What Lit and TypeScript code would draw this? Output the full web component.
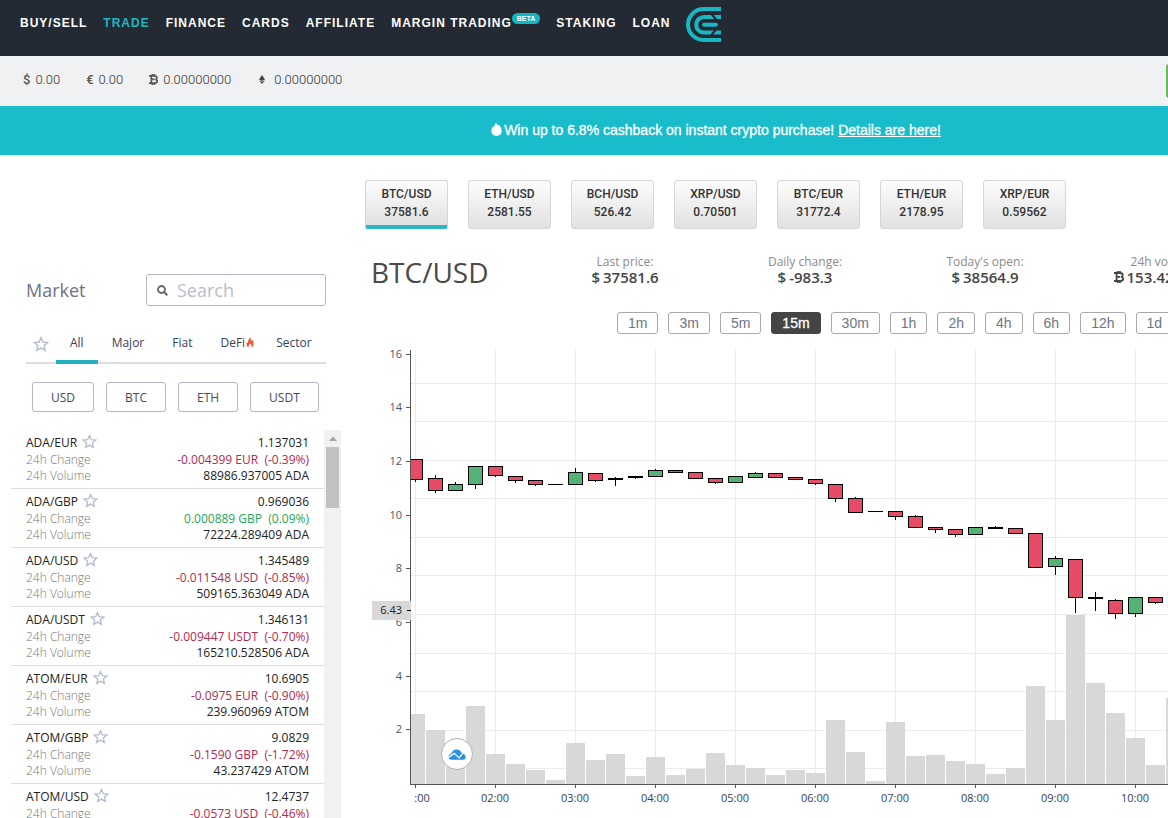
import { LitElement, html, css, svg } from "lit";
import { customElement, property } from "lit/decorators.js";
import { classMap } from "lit/directives/class-map.js";

const NAV = ["BUY/SELL", "TRADE", "FINANCE", "CARDS", "AFFILIATE", "MARGIN TRADING", "STAKING", "LOAN"];

const TICKERS = [
  ["BTC/USD", "37581.6"],
  ["ETH/USD", "2581.55"],
  ["BCH/USD", "526.42"],
  ["XRP/USD", "0.70501"],
  ["BTC/EUR", "31772.4"],
  ["ETH/EUR", "2178.95"],
  ["XRP/EUR", "0.59562"],
];

const STATS = [
  ["Last price:", "$", "37581.6"],
  ["Daily change:", "$", "-983.3"],
  ["Today's open:", "$", "38564.9"],
  ["24h volume:", "btc", "153.4226785"],
];

const INTERVALS = ["1m", "3m", "5m", "15m", "30m", "1h", "2h", "4h", "6h", "12h", "1d"];

const PAIRS = [
  ["ADA/EUR", "1.137031", "-0.004399 EUR", "(-0.39%)", "88986.937005 ADA"],
  ["ADA/GBP", "0.969036", "0.000889 GBP", "(0.09%)", "72224.289409 ADA"],
  ["ADA/USD", "1.345489", "-0.011548 USD", "(-0.85%)", "509165.363049 ADA"],
  ["ADA/USDT", "1.346131", "-0.009447 USDT", "(-0.70%)", "165210.528506 ADA"],
  ["ATOM/EUR", "10.6905", "-0.0975 EUR", "(-0.90%)", "239.960969 ATOM"],
  ["ATOM/GBP", "9.0829", "-0.1590 GBP", "(-1.72%)", "43.237429 ATOM"],
  ["ATOM/USD", "12.4737", "-0.0573 USD", "(-0.46%)", "1290.512874 ATOM"],
];

// Candles: [body top, body bottom, wick top, wick bottom, rising]
const CANDLES: number[][] = [
  [109, 130, 109, 132, 0], [128, 141, 125, 143, 0], [134, 141, 132, 141, 1], [116, 135, 116, 139, 1],
  [116, 126, 116, 127, 0], [126, 131, 126, 133, 0], [130, 135, 130, 136, 0], [134, 135, 134, 135, 0],
  [122, 135, 118, 135, 1], [123, 131, 123, 132, 0], [128, 130, 127, 136, 0], [126, 128, 126, 129, 0],
  [120, 127, 119, 127, 1], [120, 123, 120, 123, 0], [122, 129, 122, 129, 0], [128, 133, 128, 134, 0],
  [126, 133, 126, 133, 1], [123, 128, 122, 128, 1], [123, 128, 123, 128, 0], [127, 130, 127, 130, 0],
  [129, 134, 129, 135, 0], [134, 149, 134, 152, 0], [148, 163, 147, 163, 0], [161, 162, 161, 162, 0],
  [161, 167, 161, 170, 0], [166, 178, 165, 178, 0], [177, 180, 177, 183, 0], [179, 185, 179, 187, 0],
  [177, 185, 177, 185, 1], [177, 179, 176, 179, 0], [178, 184, 178, 184, 0], [183, 218, 183, 218, 0],
  [208, 217, 206, 225, 1], [209, 248, 209, 263, 0], [247, 249, 242, 261, 0], [250, 264, 249, 269, 0],
  [247, 264, 247, 267, 1], [247, 253, 247, 254, 0],
];

const VOLUMES = [
  70, 54, 29, 78, 30, 20, 14, 4, 41, 24, 30, 8, 27, 9, 15, 31, 19, 16, 9, 14, 11, 64, 32, 3, 62, 28, 29, 23, 20, 10,
  16, 98, 64, 169, 101, 71, 46, 19, 86,
];

const GRID_Y = [33, 71, 110, 148, 187, 225, 264, 303, 341, 380, 418];
const TICKS_Y: [string, number][] = [
  ["16", 4], ["14", 57], ["12", 111], ["10", 165], ["8", 218], ["6", 272], ["4", 326], ["2", 379],
];
const TICKS_X = [":00", "02:00", "03:00", "04:00", "05:00", "06:00", "07:00", "08:00", "09:00", "10:00", "11:00"];

const star = html`<svg class="star" viewBox="0 0 24 24" aria-hidden="true">
  <path d="M12 2.5l2.9 6.6 7.1.7-5.4 4.7 1.6 7-6.2-3.7-6.2 3.7 1.6-7L2 9.8l7.1-.7z" fill="none" stroke="currentColor" stroke-width="2.1" stroke-linejoin="miter"/>
</svg>`;

const btc = html`<svg class="btc" viewBox="0 0 10 12" aria-hidden="true">
  <path d="M0 2h5.8q3 0 3 2 0 1.5-1.6 1.9 2 .4 2 2.1Q9.2 10 6 10H0M2.6 2v8M2.6 5.9h3.6M3.7 0v2M6 0v2M3.7 10v2M6 10v2" fill="none" stroke="currentColor" stroke-width="1.8"/>
</svg>`;

@customElement("price-chart")
export class PriceChart extends LitElement {
  static styles = css`
    :host { display: block; position: relative; }
    .plot { display: block; width: 100%; height: 468px; overflow: hidden; font-family: "Open Sans", sans-serif; font-size: 11px; }
    .grid { stroke: #ebebeb; }
    .axis { stroke: #555; fill: none; }
    .ylabel { fill: #4a5568; text-anchor: end; }
    .xlabel { fill: #333f55; text-anchor: middle; font-weight: 500; }
    .vol { fill: #d8d8d8; }
    .candle { stroke: #000; }
    .wick { stroke: #000; }
    .up { fill: #55b276; }
    .down { fill: #e64c67; }
    .tag { fill: #d8d8d8; }
    .tagtext { fill: #222; text-anchor: end; }
    .badge {
      position: absolute; left: 81px; bottom: 48px; width: 32px; height: 32px; padding: 0;
      display: flex; align-items: center; justify-content: center;
      border: 1px solid #b5aeae; border-radius: 50%; background: #fff;
    }
    .cloud { width: 18px; height: 11px; }
  `;

  render() {
    const x = (i: number) => 55 + i * 20;
    return html`
      <svg class="plot" role="img" aria-label="BTC/USD candles and volume" shape-rendering="crispEdges">
        <g class="grid">
          ${GRID_Y.map((y) => svg`<line x1="51" x2="100%" y1=${y + 0.5} y2=${y + 0.5} />`)}
          ${TICKS_X.map((_, i) => svg`<line x1=${55.5 + i * 80} x2=${55.5 + i * 80} y1="0" y2="434" />`)}
        </g>
        <svg x="51" y="0" width="100%" height="434">
          <g transform="translate(-51 0)">
            ${VOLUMES.map((v, i) => svg`<rect class="vol" x=${x(i) - 9} y=${434 - v} width="19" height=${v} />`)}
            ${CANDLES.map(([top, bottom, high, low, rising], i) => svg`
              <line class="wick" x1=${x(i) + 0.5} x2=${x(i) + 0.5} y1=${high} y2=${low} />
              <rect class="candle ${rising ? "up" : "down"}" x=${x(i) - 6.5} y=${top + 0.5} width="14" height=${bottom - top - 1} />
              ${bottom - top < 3 ? svg`<line class="wick" x1=${x(i) - 7} x2=${x(i) + 8} y1=${top + 0.5} y2=${top + 0.5} />` : ""}`)}
          </g>
        </svg>
        <g class="axis">
          <line x1="50.5" x2="50.5" y1="0" y2="435" />
          <line x1="50" x2="100%" y1="434.5" y2="434.5" />
          ${TICKS_Y.map(([, y]) => svg`<line x1="46" x2="50" y1=${y + 0.5} y2=${y + 0.5} />`)}
          ${TICKS_X.map((_, i) => svg`<line x1=${55.5 + i * 80} x2=${55.5 + i * 80} y1="435" y2="438" />`)}
        </g>
        ${TICKS_Y.map(([label, y]) => svg`<text class="ylabel" x="42" y=${y + 4}>${label}</text>`)}
        ${TICKS_X.map((label, i) => svg`<text class="xlabel" x=${i ? 55 + i * 80 : 62} y="452">${label}</text>`)}
        <rect class="tag" x="12" y="251" width="39" height="19" />
        <line class="wick" x1="47" x2="51" y1="260.5" y2="260.5" />
        <text class="tagtext" x="42" y="264">6.43</text>
      </svg>
      <button class="badge" aria-label="Open chart provider">
        <svg class="cloud" viewBox="0 0 18 11" aria-hidden="true">
          <path d="M3.4 4.6Q4.4.6 8.4.4q3.6 0 5 3Q17.600 5 17.800 8.400 17.400 10.800 15 10.800H3Q.3 10.300.2 8 .6 5.400 3.400 4.600z" fill="#2e8fe0"/>
          <path d="M.2 8.600L6.300 4.400l4.800 4.500 4.700-6" fill="none" stroke="#fff" stroke-width="1.300"/>
        </svg>
      </button>
    `;
  }
}

@customElement("market-panel")
export class MarketPanel extends LitElement {
  static styles = css`
    :host { display: flex; flex-direction: column; min-height: 0; padding-top: 119px; font-family: "Open Sans", sans-serif; font-size: 12px; color: #222; }
    button { font: inherit; cursor: pointer; background: none; }
    .head { display: flex; align-items: center; justify-content: space-between; padding: 0 15px 0 26px; height: 32px; }
    .title { margin: 0; font-size: 18px; font-weight: 400; color: #70727f; }
    .search { display: flex; align-items: center; gap: 9px; box-sizing: border-box; width: 180px; height: 32px; padding: 0 10px; border: 1px solid #b3b6c6; border-radius: 3px; }
    .glass { width: 11px; height: 11px; flex: none; color: #62656f; }
    .field { flex: 1; min-width: 0; border: 0; outline: 0; padding: 0; background: none; font: inherit; font-size: 18px; color: #555; }
    .field::placeholder { color: #b9bdc9; opacity: 1; }
    .tabs { display: flex; margin: 24px 15px 0 26px; height: 32px; border-bottom: 2px solid #dcdce0; }
    .tab { display: flex; align-items: center; box-sizing: border-box; height: 34px; padding: 0 14px 6px; border: 0; border-bottom: 4px solid transparent; color: #3a4152; font-weight: 500; }
    .tab.on { border-bottom-color: #24b1be; }
    .tab.fav { padding: 0 7px 3px; color: #b4bccb; }
    .tab.defi { padding-right: 8px; gap: 1px; }
    .star { width: 16px; height: 16px; }
    .flame { width: 8px; height: 11px; }
    .quotes { display: flex; gap: 12px; padding: 18px 0 18px 32px; }
    .quote { box-sizing: border-box; height: 30px; padding: 0 18px; border: 1px solid #b3b6c6; border-radius: 3px; color: #454b57; }
    .scroll { display: flex; flex: 1; min-height: 0; overflow: hidden; }
    .list { flex: 1; margin: 0 0 0 11px; padding: 0; list-style: none; }
    .row { padding: 4px 15px; border-bottom: 1px solid #dedee2; }
    .line { display: flex; justify-content: space-between; height: 16px; line-height: 16px; }
    .line.first { height: 18px; line-height: 17px; }
    .name { display: flex; gap: 5px; }
    .name .star { width: 15px; height: 15px; color: #b4bccb; }
    .label { color: #777; font-weight: 300; }
    .down { color: #b02a50; white-space: pre; }
    .up { color: #1fa75a; white-space: pre; font-weight: 500; }
    .track { width: 17px; background: #f1f1f1; display: flex; flex-direction: column; align-items: center; }
    .arrow { height: 17px; width: 8px; }
    .thumb { width: 13px; height: 61px; background: #c1c1c1; }
  `;

  render() {
    return html`
      <div class="head">
        <h2 class="title">Market</h2>
        <label class="search">
          <svg class="glass" viewBox="0 0 11 11" aria-hidden="true"><circle cx="4.500" cy="4.500" r="3.500" fill="none" stroke="currentColor" stroke-width="1.800"/><path d="M7 7l3.300 3.300" stroke="currentColor" stroke-width="2"/></svg>
          <input class="field" type="text" placeholder="Search" aria-label="Search" />
        </label>
      </div>
      <div class="tabs">
        <button class="tab fav" aria-label="Favourites">${star}</button>
        ${["All", "Major", "Fiat"].map((t) => html`<button class=${classMap({ tab: true, on: t === "All" })}>${t}</button>`)}
        <button class="tab defi">DeFi<svg class="flame" viewBox="0 0 8 11" aria-hidden="true"><path d="M2.500 11Q-.4 8.500.8 5q.7.4.9 1.200Q1.800 2.600 4.600 0q-.4 2.500 1.300 4 .5-.5.6-1.400Q9 7.500 5.800 11q.4-2.400-1.500-4.200Q2 8.600 2.500 11z" fill="#e2603f"/></svg></button>
        <button class="tab">Sector</button>
      </div>
      <div class="quotes">
        ${["USD", "BTC", "ETH", "USDT"].map((q) => html`<button class="quote">${q}</button>`)}
      </div>
      <div class="scroll">
        <ul class="list">
          ${PAIRS.map(([name, price, change, pct, volume]) => html`
            <li class="row">
              <div class="line first"><span class="name">${name}${star}</span><span>${price}</span></div>
              <div class="line"><span class="label">24h Change</span><span class=${change.startsWith("-") ? "down" : "up"}>${change + "  " + pct}</span></div>
              <div class="line"><span class="label">24h Volume</span><span>${volume}</span></div>
            </li>`)}
        </ul>
        <div class="track">
          <svg class="arrow" viewBox="0 0 8 17" aria-hidden="true"><path d="M0 11l4-4.500 4 4.500z" fill="#a3a3a3"/></svg>
          <div class="thumb"></div>
        </div>
      </div>
    `;
  }
}

@customElement("app-root")
export class AppRoot extends LitElement {
  @property() pair = "BTC/USD";

  static styles = css`
    :host { display: flex; flex-direction: column; height: 100vh; overflow: hidden; background: #fff; font-family: "Liberation Sans", Arial, sans-serif; }
    button { font: inherit; cursor: pointer; }
    .top { display: flex; flex: none; align-items: center; gap: 16px; box-sizing: border-box; height: 56px; padding: 0 20px 8px; background: #242a34; }
    .link { display: flex; color: #fff; font-size: 12px; line-height: 14px; font-weight: 700; letter-spacing: 1px; text-decoration: none; white-space: nowrap; padding-bottom: 2px; }
    .link.on { color: #1fb6c1; }
    .beta { align-self: flex-start; height: 11px; line-height: 11px; margin: -3px 0 0 0; padding: 0 5px; border-radius: 6px; background: #12b5c0; font-size: 7px; letter-spacing: 0; }
    .logo { width: 35px; height: 35px; }
    .balances { display: flex; flex: none; align-items: center; height: 50px; padding-left: 23px; background: #f0f1f2; color: #333; font-family: Roboto, sans-serif; font-size: 13px; font-weight: 300; gap: 26px; }
    .balance { display: flex; align-items: center; gap: 5px; height: 18px; margin-bottom: 4px; }
    .sign { font-weight: 500; font-size: 13px; color: #555; }
    .balance .btc { width: 9px; height: 11px; color: #555; }
    .ether { width: 6px; height: 9px; margin: 0 4px 0 2px; }
    .deposit { width: 80px; height: 34px; margin: 0 -78px 0 auto; border: 0; border-radius: 3px; background: #68b95c; color: #fff; font-size: 13px; flex: none; }
    .banner { display: flex; flex: none; justify-content: center; align-items: center; box-sizing: border-box; height: 49px; padding: 0 0 2px 264px; background: #18bccb; color: #fff; font-size: 14px; -webkit-text-stroke: 0.3px #fff; }
    .banner a { color: inherit; margin-left: 4px; }
    .drop { width: 11px; height: 13px; margin-right: 2px; }
    .body { display: grid; grid-template-columns: 341px 1fr; flex: 1; min-height: 0; }
    .main { display: flex; flex-direction: column; min-width: 0; padding: 25px 0 0 19px; overflow: hidden; }
    .tickers { display: flex; gap: 20px; margin-left: 5px; }
    .ticker { box-sizing: border-box; width: 83px; height: 49px; flex: none; padding: 0 0 4px; border: 1px solid #d6d6d6; border-radius: 3px; background: linear-gradient(#fdfdfd, #e1e1e1); color: #333; font: 500 12px/18px Roboto, sans-serif; }
    .ticker.on { border-bottom: 4px solid #2cb5c2; padding-bottom: 1px; }
    .pairname { display: block; }
    .summary { display: flex; margin: 24px 0 0 11px; height: 44px; font-family: "Open Sans", sans-serif; }
    .pair { flex: none; width: 164px; margin: 0; font-size: 28px; line-height: 38px; font-weight: 400; color: #4a4a4a; }
    .stat { flex: none; width: 180px; padding-top: 1px; text-align: center; color: #8b8b8b; font-size: 12px; line-height: 16px; }
    .value { display: flex; justify-content: center; align-items: center; gap: 3px; color: #444; font-size: 15px; line-height: 15px; font-weight: 600; }
    .value .btc { width: 10px; height: 12px; }
    .intervals { display: flex; gap: 10px; margin: 15px 0 16px 257px; }
    .interval { flex: none; box-sizing: border-box; height: 22px; padding: 0 10px; border: 1px solid #a9a9a9; border-radius: 3px; background: #fff; color: #6c7684; font-size: 14px; line-height: 20px; }
    .interval.on { background: #444; border-color: #444; color: #fff; -webkit-text-stroke: 0.3px #fff; }
  `;

  render() {
    return html`
      <nav class="top">
        ${NAV.map((n) => html`<a href="#" class=${classMap({ link: true, on: n === "TRADE" })}>${n}${n === "MARGIN TRADING" ? html`<span class="beta">BETA</span>` : ""}</a>`)}
        <svg class="logo" viewBox="0 0 35 35" aria-label="CEX">
          <g fill="none" stroke="#17b8c3" stroke-width="4">
            <path d="M35 2H17.500a15.500 15.500 0 0 0 0 31H35"/>
            <path d="M35 10H18a7.800 7.800 0 0 0 0 15.600H35"/>
            <path d="M18 17.800H30" stroke-linecap="round"/>
          </g>
          <path d="M26 7.500l8 10-8.500 10.500" fill="none" stroke="#242a34" stroke-width="2.200"/>
        </svg>
      </nav>
      <div class="balances">
        <span class="balance"><span class="sign">$</span>0.00</span>
        <span class="balance"><span class="sign">€</span>0.00</span>
        <span class="balance">${btc}0.00000000</span>
        <span class="balance"><svg class="ether" viewBox="0 0 6 9" aria-hidden="true"><path d="M3 0l3 4.600-3 1.500L0 4.600zM0 5.400l3 1.400 3-1.400L3 9z" fill="#444"/></svg>0.00000000</span>
        <button class="deposit" aria-label="Deposit"></button>
      </div>
      <div class="banner">
        <svg class="drop" viewBox="0 0 11 13" aria-hidden="true"><path d="M5 0q1.300 1 1.800 2.400L8 1.700q3 3 2.700 6.300-.4 4.800-5.200 5Q.5 12.600.3 8 .3 5 2.200 3.200l.8 1Q3.300 1.600 5 0z" fill="#fff"/></svg>
        <span>Win up to 6.8% cashback on instant crypto purchase!</span><a href="#">Details are here!</a>
      </div>
      <div class="body">
        <market-panel></market-panel>
        <main class="main">
          <div class="tickers">
            ${TICKERS.map(([name, price]) => html`<button class=${classMap({ ticker: true, on: name === this.pair })}><span class="pairname">${name}</span>${price}</button>`)}
          </div>
          <div class="summary">
            <h1 class="pair">${this.pair}</h1>
            ${STATS.map(([label, unit, value]) => html`<div class="stat">${label}<div class="value"><span>${unit === "btc" ? btc : unit}</span>${value}</div></div>`)}
          </div>
          <div class="intervals">
            ${INTERVALS.map((t) => html`<button class=${classMap({ interval: true, on: t === "15m" })}>${t}</button>`)}
          </div>
          <price-chart></price-chart>
        </main>
      </div>
    `;
  }
}
